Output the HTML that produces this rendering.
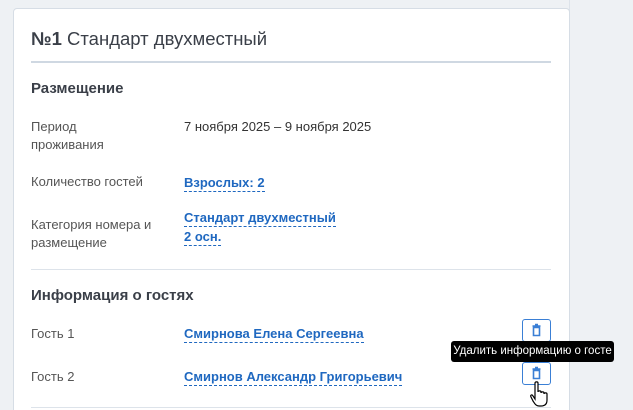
<!DOCTYPE html>
<html><head><meta charset="utf-8"><style>
*{margin:0;padding:0;box-sizing:border-box}
html,body{width:633px;height:410px;overflow:hidden}
body{background:#eef1f4;font-family:"Liberation Sans",sans-serif;position:relative;color:#333}
.card{position:absolute;left:13px;top:8px;width:557px;height:420px;background:#fff;border:1px solid #d6dde5;border-radius:4px}
.a{position:absolute;white-space:nowrap}
.t{left:31px;top:28px;font-size:18.5px;color:#3a3f48}
.sep{position:absolute;left:31px;top:61px;width:520px;height:2px;background:#cfd8e2}
.h{font-size:15px;font-weight:bold;color:#3a3f48}
.l{font-size:13px;color:#555;line-height:18px}
.v{font-size:13px;color:#333}
.k{font-size:13px;font-weight:bold;color:#1f68c0;border-bottom:1px dashed #1f68c0;line-height:16px}
.div{position:absolute;left:31px;width:520px;height:1px;background:#dde3ea}
.btn{position:absolute;left:522px;width:29px;height:23px;border:1px solid #3a7fd5;border-radius:3px;background:#fff}
.tip{position:absolute;left:451px;top:341px;width:163px;height:21px;background:#000;border-radius:3px;color:#fff;font-size:11.5px;line-height:21px;text-align:center;white-space:nowrap}
</style></head><body>
<div style="position:absolute;left:569px;top:0;width:1px;height:410px;background:#dde3ea"></div>
<div class="card"></div>
<div class="a t"><b>№1</b> Стандарт двухместный</div>
<div class="sep"></div>
<div class="a h" style="left:31px;top:80px">Размещение</div>
<div class="a l" style="left:31px;top:118px">Период<br>проживания</div>
<div class="a v" style="left:184px;top:119px">7 ноября 2025 – 9 ноября 2025</div>
<div class="a l" style="left:31px;top:173px">Количество гостей</div>
<div class="a k" style="left:184px;top:175px">Взрослых: 2</div>
<div class="a l" style="left:31px;top:216px">Категория номера и<br>размещение</div>
<div class="a k" style="left:184px;top:210px">Стандарт двухместный</div>
<div class="a k" style="left:184px;top:229px">2 осн.</div>
<div class="div" style="top:269px"></div>
<div class="a h" style="left:31px;top:287px">Информация о гостях</div>
<div class="a l" style="left:31px;top:325px">Гость 1</div>
<div class="a k" style="left:184px;top:326px">Смирнова Елена Сергеевна</div>
<div class="a l" style="left:31px;top:368px">Гость 2</div>
<div class="a k" style="left:184px;top:369px">Смирнов Александр Григорьевич</div>
<div class="div" style="top:407px"></div>
<div class="btn" style="top:319px"><svg width="27" height="21" viewBox="0 0 27 21"><path d="M9.5 6h8M12 4.5h3M10.5 7.5v8h6v-8z" fill="none" stroke="#3a7fd5" stroke-width="1.6"/></svg></div>
<div class="btn" style="top:362px"><svg width="27" height="21" viewBox="0 0 27 21"><path d="M9.5 6h8M12 4.5h3M10.5 7.5v8h6v-8z" fill="none" stroke="#3a7fd5" stroke-width="1.6"/></svg></div>
<div class="tip">Удалить информацию о госте</div>
<svg style="position:absolute;left:530px;top:381px" width="22" height="28" viewBox="0 0 22 28"><path d="M5 2c0-1.5 3-1.5 3 0v9c0-1.5 3-1.5 3 0v1c0-1.5 3-1.5 3 0v1c0-1.5 3-1.5 3 0v6c0 4-2 6-6 6h-2c-3 0-4-2-6-5l-2-4c-1-2 1-3 2-1l2 3z" fill="#fff" stroke="#000" stroke-width="1.2"/></svg>
</body></html>
